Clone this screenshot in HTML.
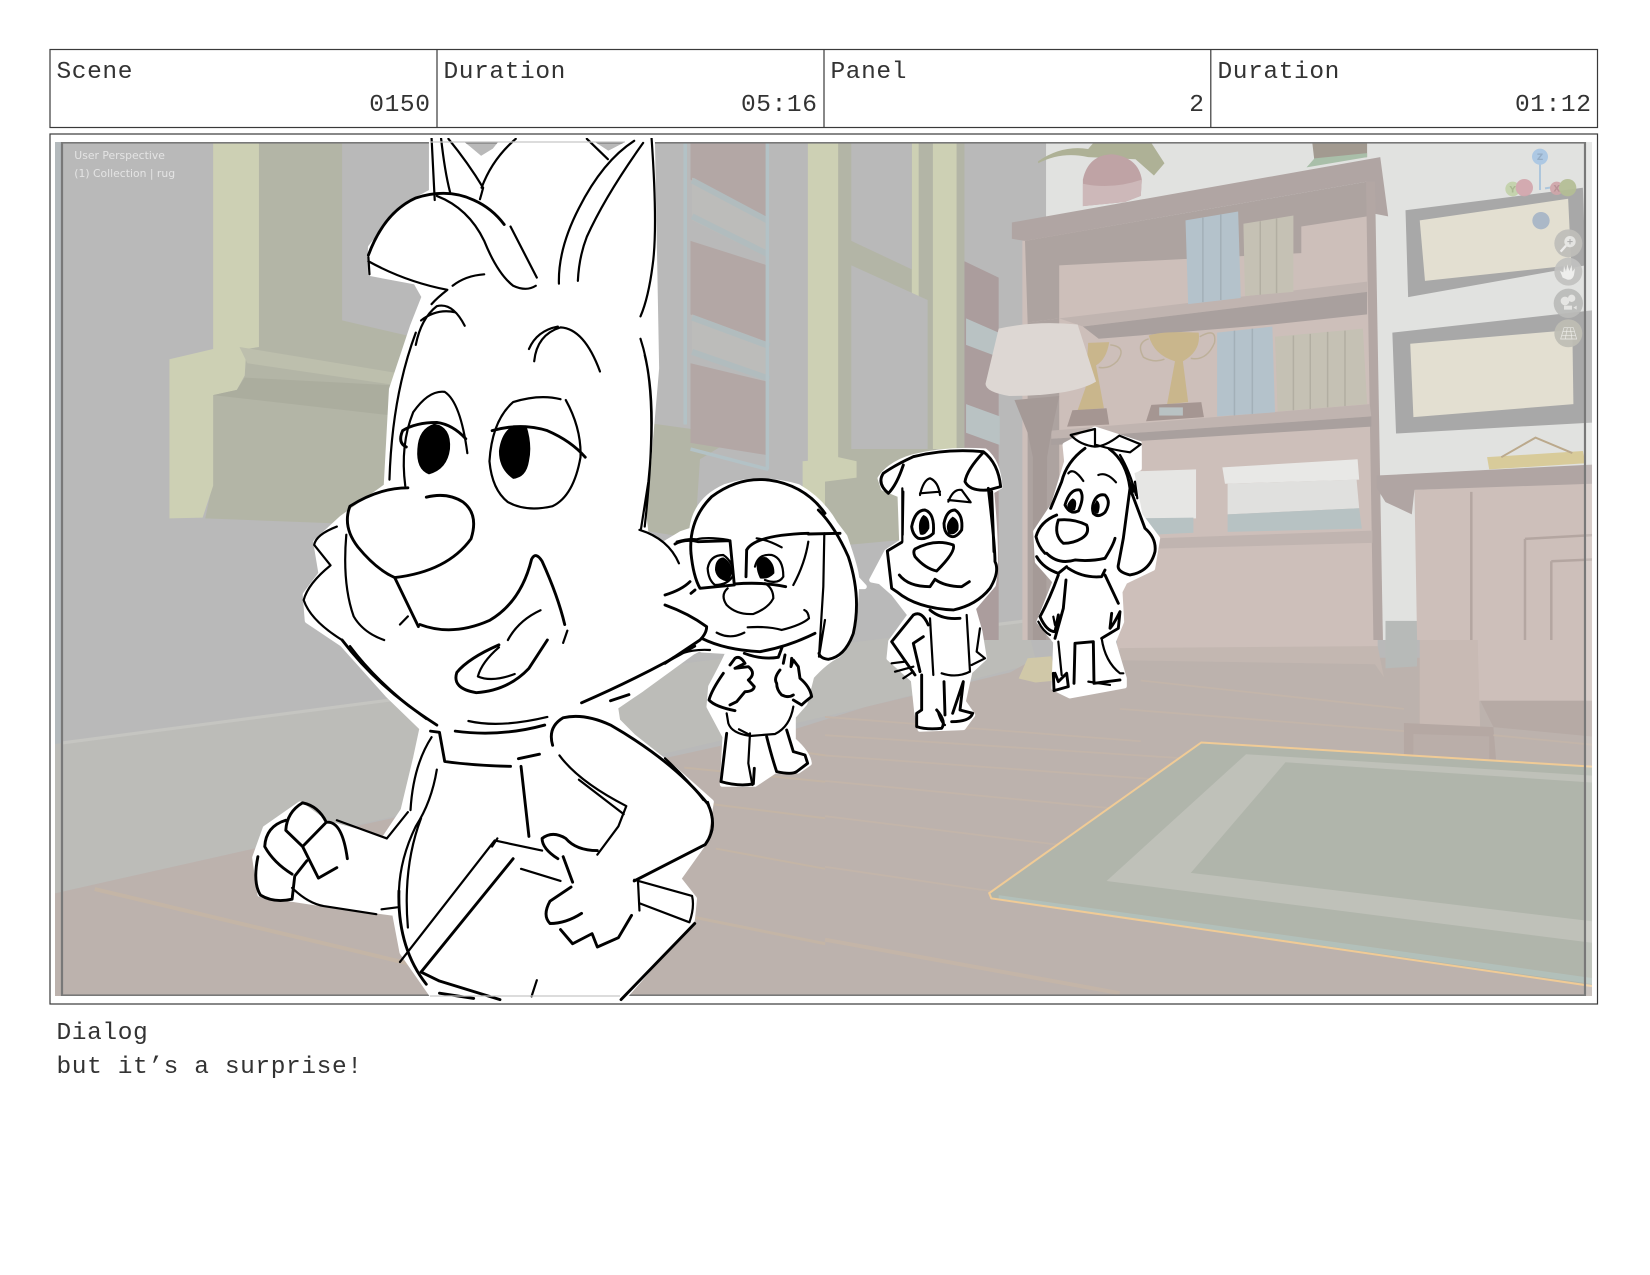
<!DOCTYPE html>
<html><head><meta charset="utf-8"><title>Storyboard panel</title>
<style>
html,body{margin:0;padding:0;background:#fff;width:1650px;height:1275px;overflow:hidden}
svg{display:block}
.t{font-family:"Liberation Mono",monospace;font-size:24.5px;letter-spacing:.6px;fill:#333}
.v{font-family:"DejaVu Sans",sans-serif;font-size:10.8px;fill:#e4e4e4}
.g{font-family:"DejaVu Sans",sans-serif;font-size:26px;font-weight:bold;text-anchor:middle}
.l path{fill:none;stroke:#000;stroke-width:2.2;vector-effect:non-scaling-stroke;stroke-linecap:round;stroke-linejoin:round}
.l path.b{stroke-width:2.9}
.l path.s{fill:#000;stroke:none}
.w path{fill:#fff;stroke:#fff;stroke-width:5;vector-effect:non-scaling-stroke;stroke-linejoin:round}
</style></head><body>
<svg width="1650" height="1275" viewBox="0 0 1650 1275" xmlns="http://www.w3.org/2000/svg">
<defs><clipPath id="sc"><rect x="55" y="142" width="1537" height="854"/></clipPath>
<clipPath id="ch"><rect x="55" y="138" width="1537" height="864"/></clipPath></defs>
<rect width="1650" height="1275" fill="#fff"/>

<!-- header table -->
<g fill="none" stroke="#3a3a3a" stroke-width="1.2">
<rect x="50" y="49.5" width="1547.5" height="78"/>
<path d="M437 49.5V127.5M824 49.5V127.5M1210.8 49.5V127.5"/>
<rect x="50" y="134" width="1547.5" height="870"/>
</g>
<text class="t" x="56.5" y="78">Scene</text><text class="t" x="430.5" y="111" text-anchor="end">0150</text>
<text class="t" x="443.5" y="78">Duration</text><text class="t" x="817.5" y="111" text-anchor="end">05:16</text>
<text class="t" x="830.5" y="78">Panel</text><text class="t" x="1204.5" y="111" text-anchor="end">2</text>
<text class="t" x="1217.5" y="78">Duration</text><text class="t" x="1591.5" y="111" text-anchor="end">01:12</text>
<text class="t" x="56.5" y="1039">Dialog</text>
<text class="t" x="56.5" y="1073">but it’s a surprise!</text>

<!-- scene -->
<g clip-path="url(#sc)">
<rect x="55" y="142" width="1537" height="854" fill="#b9b9b9"/>
<rect x="55" y="142" width="7" height="854" fill="#b4babd"/>
<!-- floor + baseboard (main coords) -->
<g transform="scale(1.0523)">
<polygon fill="#bcbcb8" points="52,707 380,664 975,590 985,630 822,672 252,804 52,849"/>
<polygon fill="#bcb2ad" points="52,849 252,804 752,694 822,672 960,639 985,625 1510,625 1510,950 52,950"/>
<path d="M59,706 L380,664 M935,595 L975,590" stroke="#c5c5c1" stroke-width="3" fill="none"/>
</g>
<!-- left window (z1 coords) -->
<g transform="scale(.5263,.4082)">
<polygon fill="#b3b5a6" points="492,340 650,340 650,785 800,830 800,1290 390,1270 403,1190 403,968 450,955 465,920 468,855 492,850"/>
<polygon fill="#cdd0b4" points="405,340 492,340 492,850 468,855 465,920 450,955 405,968 405,1190 385,1268 322,1270 322,880 405,855"/>
<polygon fill="#bdbfad" points="455,850 760,915 760,945 470,890"/>
<polygon fill="#abad9e" points="405,968 450,955 465,925 760,945 760,1020"/>
<polygon fill="#b3b5a6" points="1225,1035 1365,1060 1368,1095 1330,1125 1320,1320 1225,1300"/>
<polygon fill="#b3a7a5" points="1312,340 1458,340 1458,540 1312,440"/>
<polygon fill="#b3a7a5" points="1312,590 1458,650 1458,850 1312,770"/>
<polygon fill="#b3a7a5" points="1312,890 1458,935 1458,1115 1312,1085"/>
<polygon fill="#bcbcba" points="1315,435 1458,535 1458,630 1315,540"/>
<polygon fill="#bcbcba" points="1315,770 1462,840 1462,935 1315,870"/>
<path d="M1315,442 L1458,540M1315,530 L1458,622M1315,778 L1462,848M1315,862 L1462,928" stroke="#b1bcbe" stroke-width="6" fill="none" vector-effect="non-scaling-stroke"/>
<path d="M1302,340V1040M1458,340V1150M1312,1100 L1460,1150" stroke="#b3c2c6" stroke-width="3.5" fill="none" vector-effect="non-scaling-stroke"/>
<polygon fill="#cdd0b4" points="1525,1130 1568,1125 1568,1320 1525,1320"/>
<polygon fill="#cdd0b4" points="1535,340 1568,340 1568,1130 1535,1130"/>
</g>
<!-- right window + bookshelf (z2 coords) -->
<g transform="translate(825,0) scale(.5263,.4082)">
<polygon fill="#e1e2e0" points="420,340 1470,340 1470,1568 420,1568"/>
<polygon fill="#b7bab8" points="1065,1521 1130,1521 1130,1568 1065,1568"/>
<polygon fill="#b3b5a6" points="0,340 265,340 265,1130 170,1320 0,1340"/>
<polygon fill="#cdd0b4" points="0,340 25,340 25,1120 60,1130 60,1170 0,1180"/>
<polygon fill="#cdd0b4" points="165,340 178,340 178,1000 165,1000"/>
<polygon fill="#cdd0b4" points="205,340 250,340 250,1100 205,1100"/>
<polygon fill="#b9b9b9" points="50,340 165,340 165,660 50,590"/>
<polygon fill="#b9b9b9" points="50,650 195,735 195,1100 50,1100"/>
<!-- brick panels behind -->
<polygon fill="#ab9d9d" points="265,640 330,680 330,1568 265,1568"/>
<polygon fill="#b9c2c3" points="268,780 330,815 330,875 268,845"/>
<polygon fill="#b9c2c3" points="268,990 332,1020 332,1090 268,1060"/>
<!-- shelf -->
<polygon fill="#cdbfba" points="375,590 1040,445 1060,1568 375,1568"/>
<polygon fill="#ada3a0" points="380,590 1030,445 1030,530 905,555 905,620 445,650 445,780 385,790"/>
<polygon fill="#ada3a0" points="385,790 445,780 445,1568 385,1568"/>
<polygon fill="#c0b4b0" points="445,780 1030,690 1030,715 490,800"/>
<polygon fill="#a9a09e" points="490,800 1030,715 1030,770 850,795 520,830"/>
<polygon fill="#b0a5a3" points="355,545 1055,385 1070,530 1030,520 1030,445 380,590 355,585"/>
<polygon fill="#b3a7a4" points="1028,445 1045,445 1060,1568 1042,1568"/>
<polygon fill="#c0b4b0" points="430,1055 1035,990 1038,1020 430,1075"/>
<polygon fill="#a9a09e" points="430,1075 1038,1020 1038,1045 600,1080 430,1090"/>
<polygon fill="#c0b4b0" points="600,1320 1040,1300 1040,1330 600,1345"/>
<!-- books -->
<polygon fill="#b4c2cb" points="685,540 785,518 790,730 690,745"/>
<path d="M718,533V740M752,525V735" stroke="#a3b0b8" stroke-width="1.5" fill="none" vector-effect="non-scaling-stroke"/>
<polygon fill="#c5c1b4" points="795,548 890,528 890,715 798,725"/>
<path d="M827,542V722M858,535V718" stroke="#b2aea2" stroke-width="1.5" fill="none" vector-effect="non-scaling-stroke"/>
<polygon fill="#b4c2cb" points="745,815 850,800 855,1010 745,1020"/>
<path d="M778,810V1018M812,805V1014" stroke="#a3b0b8" stroke-width="1.5" fill="none" vector-effect="non-scaling-stroke"/>
<polygon fill="#c5c1b4" points="855,825 1022,805 1030,990 860,1008"/>
<path d="M890,822V1005M922,818V1002M955,813V998M988,810V995" stroke="#b2aea2" stroke-width="1.5" fill="none" vector-effect="non-scaling-stroke"/>
<!-- trophies -->
<path d="M615,822 Q640,810 710,815 Q715,860 680,885 L690,985 L650,990 L665,885 Q625,870 615,822Z" fill="#c9b68c"/>
<path d="M615,830 Q590,840 605,875 Q625,890 645,880M712,825 Q745,800 740,840 Q725,885 695,878" stroke="#bdb09a" stroke-width="1.5" fill="none" vector-effect="non-scaling-stroke"/>
<polygon fill="#a59692" points="620,992 715,985 720,1022 610,1032"/>
<rect x="635" y="998" width="45" height="20" fill="#b9c2c3"/>
<path d="M500,840 L540,838 Q535,880 515,895 L530,1000 L480,1005 L495,950Z" fill="#c9b68c"/>
<path d="M542,845 Q575,850 555,885 Q540,905 520,900" stroke="#bdb09a" stroke-width="1.5" fill="none" vector-effect="non-scaling-stroke"/>
<polygon fill="#a59692" points="470,1005 535,1000 540,1040 460,1045"/>
<!-- lamp -->
<polygon fill="#a59a97" points="360,980 445,970 430,1060 422,1120 420,1568 395,1568 395,1120 385,1060"/>
<path d="M330,805 Q400,785 480,795 L515,935 Q470,970 350,970 Q305,960 305,940Z" fill="#ddd7d3"/>
<!-- pots -->
<path d="M405,395 Q450,355 500,365 L510,350 L620,350 L645,400 L625,430 L590,390 L500,385 Q450,370 405,400Z" fill="#aeb196"/>
<path d="M490,440 Q500,380 545,378 Q595,385 602,440 L600,480 L570,495 L490,505Z" fill="#bfa3a5"/>
<path d="M490,450 Q545,465 602,440 L600,480 L570,495 L490,505Z" fill="#cdb8b9"/>
<polygon fill="#a29a90" points="925,340 1030,340 1030,385 930,395"/>
<polygon fill="#a9bfa9" points="915,410 930,388 1030,375 1030,385"/>
<!-- picture frames -->
<polygon fill="#a8a8a8" points="1103,515 1440,460 1445,650 1108,728"/>
<polygon fill="#e3dfd1" points="1130,540 1412,487 1418,650 1140,688"/>
<polygon fill="#a8a8a8" points="1078,815 1460,760 1460,1035 1085,1062"/>
<polygon fill="#e3dfd1" points="1112,842 1420,808 1422,990 1118,1022"/>
<!-- desk -->
<polygon fill="#cdbfba" points="1120,1200 1470,1180 1470,1568 1125,1568"/>
<polygon fill="#b0a5a3" points="1048,1165 1460,1138 1460,1185 1120,1200 1115,1260 1065,1230 1048,1195"/>
<path d="M1228,1205V1568M1330,1320 L1470,1310 M1330,1320V1568M1380,1375 L1470,1370 M1380,1375V1568" stroke="#b4a6a1" stroke-width="2.5" fill="none" vector-effect="non-scaling-stroke"/>
<polygon fill="#d8cb9a" points="1258,1120 1440,1105 1445,1135 1262,1150"/>
<path d="M1285,1120 L1350,1072 L1420,1110" stroke="#bba98c" stroke-width="2" fill="none" vector-effect="non-scaling-stroke"/>
<!-- boxes -->
<polygon fill="#e8e8e6" points="755,1145 1012,1125 1015,1175 760,1185"/>
<polygon fill="#e0e0de" points="765,1185 1010,1175 1015,1245 765,1260"/>
<polygon fill="#b7c2c3" points="765,1260 1015,1245 1020,1295 765,1303"/>
<polygon fill="#e6e6e4" points="580,1155 705,1150 705,1270 580,1270"/>
<polygon fill="#b7c2c3" points="590,1270 700,1268 700,1305 620,1310"/>
</g>
<!-- lower right (z4 coords) -->
<g transform="translate(825,640) scale(.5263,.405)">
<polygon fill="#bcb2ad" points="380,70 1470,55 1470,900 380,900"/>
<polygon fill="#cdbfba" points="555,0 1050,0 1050,25 555,25"/>
<polygon fill="#c3b7b1" points="560,20 1050,15 1062,92 1045,60 560,50"/>
<polygon fill="#b7bab8" points="1065,0 1125,0 1125,65 1065,70"/>
<polygon fill="#cdbfba" points="1240,0 1470,0 1470,150 1240,150"/>
<polygon fill="#b6aaa5" points="1245,150 1470,150 1470,240 1270,215"/>
<polygon fill="#c8bab4" points="1130,0 1240,0 1245,225 1130,225"/>
<polygon fill="#b5a8a3" points="1100,205 1270,215 1275,295 1100,285"/>
<polygon fill="#baaea9" points="1118,232 1262,238 1262,295 1118,285"/>
<polygon fill="#d0c8a8" points="368,95 385,45 430,40 440,100 400,105"/>
<path d="M0,190 L600,250M0,235 L680,292M0,285 L640,345M0,348 L540,415M0,435 L440,505M0,560 L315,620M600,100 L1100,170M560,170 L1100,225M1270,235 L1470,260" stroke="#c3b5aa" stroke-width="1.8" fill="none" vector-effect="non-scaling-stroke"/>
<path d="M0,740 L560,872" stroke="#c4b5a8" stroke-width="4" fill="none" vector-effect="non-scaling-stroke"/>
<polygon fill="#b0b5ab" points="715,253 1460,313 1460,855 315,638 312,625"/>
<polygon fill="#bfc1b9" points="800,282 1460,335 1460,748 535,595"/>
<polygon fill="#b0b5ab" points="875,302 1460,352 1460,695 695,575"/>
<polygon fill="#b2c0ba" points="330,630 1460,835 1460,850 330,640"/>
<path d="M1460,313 L715,253 L312,625 L316,638 L1460,855" stroke="#f0cb96" stroke-width="2" fill="none" vector-effect="non-scaling-stroke"/>
</g>
<!-- lower left floor stripes (z3) -->
<g transform="translate(0,640) scale(.5263,.405)" fill="none" stroke="#c4b5a6">
<path d="M180,615 L780,800" stroke-width="4" vector-effect="non-scaling-stroke"/>
<path d="M1320,685 L1568,750" stroke-width="3" vector-effect="non-scaling-stroke"/>
<path d="M1350,405 L1568,440M1360,515 L1568,565M1400,255 L1568,285M1300,315 L1568,350" stroke-width="2" vector-effect="non-scaling-stroke"/>
</g>
<!-- frame -->
<rect x="62" y="142.5" width="1523" height="853" fill="none" stroke="#787878" stroke-width="2.2"/>
<rect x="1586" y="142" width="6" height="854" fill="#fff" opacity=".22"/>
<text class="v" x="74.3" y="159">User Perspective</text>
<text class="v" x="74.3" y="177">(1) Collection | rug</text>
<!-- gizmo + icons -->
<g transform="translate(1490,135) scale(.3333)" opacity=".92">
<path d="M150,85V165M165,160L200,155" stroke="#a9c4dc" stroke-width="6" fill="none"/>
<circle cx="150" cy="65" r="24" fill="#a9c6e4"/>
<circle cx="68" cy="162" r="22" fill="#c3d2aa"/>
<circle cx="103" cy="158" r="26" fill="#d2a6ad"/>
<circle cx="200" cy="160" r="20" fill="#d0a6aa"/>
<circle cx="233" cy="158" r="26" fill="#b4be95"/>
<circle cx="153" cy="257" r="26" fill="#a7b5c7"/>
<text class="g" x="150" y="75" fill="#8fa9c4">Z</text>
<text class="g" x="68" y="172" fill="#a6b68c">Y</text>
<text class="g" x="200" y="170" fill="#b58c90">X</text>
<circle cx="235" cy="325" r="42" fill="#bfbeba"/>
<circle cx="235" cy="410" r="42" fill="#c2c2c0"/>
<circle cx="235" cy="505" r="44" fill="#bbbbb9"/>
<circle cx="235" cy="595" r="42" fill="#bfbeb5"/>
<path d="M228,332L212,350" stroke="#eee" stroke-width="7" fill="none"/>
<circle cx="240" cy="320" r="17" fill="#e8e8e6"/>
<path d="M232,320H248M240,312V328" stroke="#aaa" stroke-width="3" fill="none"/>
<path d="M218,428 L210,408 L220,412 L222,392 L228,410 L232,388 L238,408 L245,390 L247,410 L255,400 L252,420 Q248,436 232,434Z" fill="#f0f0ee"/>
<circle cx="225" cy="498" r="13" fill="#e6e6e4"/><circle cx="245" cy="490" r="11" fill="#e6e6e4"/>
<rect x="222" y="512" width="24" height="12" fill="#e6e6e4"/><path d="M250,518L260,512V524Z" fill="#e6e6e4"/>
<path d="M222,578H250L260,612H212ZM232,578L226,612M241,578L246,612M218,590H254M215,601H258" stroke="#efefec" stroke-width="2" fill="none"/>
</g>
</g>

<!-- characters -->
<g clip-path="url(#ch)">
<g class="w">
<g transform="scale(1.0523)">
<path d="M410,133 L435,133 L445,141 L457,151 L470,143 L478,133 L558,133 L578,146 L603,133 L620,133 L624,350 L612,490 L614,508 L638,522 L653,540 L648,570 L678,610 L658,620 L610,655 L585,672 L587,685 L602,700 L640,730 L676,762 L670,800 L645,835 L660,854 L658,874 L593,948 L412,948 L382,905 L375,868 L300,858 L247,850 L242,815 L252,787 L285,764 L310,782 L365,797 L383,770 L395,720 L401,692 L368,660 L325,612 L292,590 L290,565 L305,545 L300,515 L325,492 L367,462 L372,370 L392,310 L403,282 L395,268 L352,260 L352,235 L382,197 L410,182Z"/>
</g>
<g transform="translate(665,470) scale(.3333)">
<path d="M80,180 Q90,90 180,50 Q280,15 400,50 Q470,90 510,160 L540,200 Q575,300 575,325 L598,350 L575,350 Q570,500 520,555 Q480,575 440,620 L420,700 L385,740 L385,810 Q430,850 433,880 L400,903 L330,903 L270,943 L172,943 L180,800 L132,710 L137,650 Q180,570 190,545 L110,540 L60,520 L0,570 L0,220 L50,190Z"/>
</g>
<g transform="translate(870,445) scale(.3333)">
<path d="M30,100 Q60,55 130,35 Q230,10 345,18 Q385,50 390,125 L365,140 Q385,350 370,420 L310,490 L330,560 L343,640 L300,680 L280,770 L308,810 L280,848 L150,853 L140,800 L130,705 L57,640 L62,590 L120,510 L70,445 L30,410 L5,405 L50,320 L95,290 L90,150 L40,130Z"/>
</g>
<g transform="translate(1030,425) scale(.3333)">
<path d="M105,60 L195,12 L328,55 L328,130 L305,140 L330,270 L383,340 L368,430 L285,470 L270,500 L275,590 L250,650 L283,760 L283,783 L120,813 L72,790 L77,650 L27,590 L75,470 L22,410 L17,320 L70,240 L110,110Z"/>
</g>
</g>

<!-- big dog top -->
<g class="l" transform="scale(.5263,.4082)">
<path d="M820,338 Q823,420 826,490M838,338 Q845,420 855,470M852,340 Q890,400 918,460 Q915,475 912,488M980,340 Q935,390 915,460"/>
<path d="M1115,340 Q1135,365 1155,390M1205,345 Q1145,395 1100,510 Q1060,610 1062,695M1222,350 Q1150,480 1115,580 Q1100,630 1098,688M1238,338 Q1250,560 1240,650 Q1232,730 1217,775"/>
<path class="b" d="M700,625 Q730,520 790,485 Q850,460 900,490 Q935,510 958,550"/>
<path d="M700,630 L702,672M700,640 Q770,690 850,710 Q830,730 820,745M860,700 Q885,675 920,672M830,480 Q890,510 920,590 Q945,670 975,700 Q1000,715 1018,700M970,555 L1020,680"/>
<path d="M790,845 Q800,780 830,750 Q860,740 883,798M800,785 Q830,755 865,765"/>
<path d="M1015,885 Q1020,820 1065,802 Q1110,805 1140,910M1005,855 Q1020,810 1060,800"/>
<path d="M790,815 Q745,970 740,1175"/>
<path d="M1217,830 Q1250,960 1232,1180 L1218,1295M1225,870 Q1250,1000 1225,1290"/>
<path d="M770,1190 Q760,1090 785,1010 Q815,955 845,960 Q875,985 888,1110"/>
<path class="b" d="M885,1075 Q860,1040 830,1035 Q790,1035 765,1055 Q755,1085 772,1095"/>
<path class="s" d="M825,1038 Q858,1045 855,1100 Q850,1150 815,1162 Q790,1150 793,1100 Q795,1050 825,1038Z"/>
<path d="M1065,978 Q1025,965 975,985 Q935,1030 930,1130 Q935,1200 965,1230 Q1000,1255 1050,1240 Q1090,1215 1103,1120 Q1105,1050 1075,980"/>
<path class="b" d="M935,1055 Q990,1035 1040,1055 Q1085,1080 1112,1120"/>
<path class="s" d="M975,1042 L1000,1042 Q1012,1090 1005,1130 Q1000,1170 975,1173 Q948,1150 948,1105 Q952,1060 975,1042Z"/>
<path class="b" d="M775,1195 Q720,1195 665,1240 Q650,1290 680,1340 Q715,1395 750,1415 Q850,1400 895,1320 Q910,1260 880,1230 Q850,1205 810,1218"/>
<path d="M640,1290 Q600,1310 597,1335 L628,1385 Q585,1430 577,1470 Q590,1520 650,1568M658,1310 Q650,1430 672,1510 Q690,1550 730,1568"/>
<path class="b" d="M750,1415 L795,1535M798,1530 Q860,1560 930,1520 Q990,1475 1010,1370 Q1018,1350 1030,1375 Q1060,1460 1073,1530"/>
<path d="M760,1530 L775,1510M1027,1495 Q985,1520 965,1568M1078,1545 L1070,1575M1215,1298 Q1270,1320 1290,1380"/>
</g>
<!-- big dog bottom -->
<g class="l" transform="translate(0,640) scale(.5263,.405)">
<path class="b" d="M650,0 Q720,120 830,210"/>
<path d="M665,15 Q720,110 810,195"/>
<path class="b" d="M948,12 Q890,45 868,80 Q858,120 905,130 Q965,125 1005,70 L1040,0"/>
<path d="M948,18 Q915,55 908,90 Q935,105 978,84"/>
<path class="b" d="M1320,15 Q1220,90 1105,155M1195,135 L1160,150M865,225 Q950,240 1035,210"/>
<path d="M890,200 Q950,218 1040,190"/>
<path class="b" d="M818,225 L835,228 L845,300 Q900,310 970,312M985,293 L1025,282"/>
<path d="M820,240 Q785,310 780,420M830,320 Q820,400 790,460 Q760,540 758,620M800,440 Q765,560 775,710"/>
<path class="b" d="M758,620 Q755,760 810,850M990,312 L1005,485"/>
<path class="b" d="M1050,260 Q1040,215 1070,192 Q1110,180 1160,210 Q1280,300 1345,405 Q1365,460 1340,505 L1205,595"/>
<path d="M1345,400 Q1360,460 1350,480M1063,285 Q1100,350 1190,410 L1175,460 L1135,530M1100,345 L1185,430"/>
<path class="b" d="M575,402 Q545,425 543,470 L575,510 L620,450 Q605,410 575,402ZM620,450 Q650,445 660,540M575,510 L605,588 L640,562M543,445 Q505,460 503,510 Q520,550 555,578M583,545 L560,583 L555,640 Q520,650 495,630 Q480,600 490,535"/>
<path d="M640,445 L735,490 L775,425M555,612 Q585,650 615,657 L715,677M725,665 L755,660"/>
<path d="M760,795 L940,495 L1030,520M945,490 L935,510M990,565 L1065,595M1020,840 L1010,880"/>
<path class="b" d="M975,540 L800,820 L835,842 L950,888M835,872 L900,885M1180,888 L1320,700"/>
<path d="M1205,592 L1315,632 Q1320,660 1310,697 L1215,650M1212,590 L1215,668"/>
<path class="b" d="M1060,540 Q1030,515 1030,490 Q1050,470 1075,490 Q1095,520 1135,520M1070,535 L1088,598M1085,610 L1045,645 Q1030,680 1045,700 Q1075,700 1105,675M1065,715 L1088,750 L1125,725 L1135,758 L1175,735 L1200,680"/>
</g>
<!-- dog 2 -->
<g class="l" transform="translate(665,470) scale(.3333)">
<path class="b" d="M78,250 Q70,150 140,80 Q220,20 310,30 Q420,45 480,130M460,120 Q510,170 550,260 Q590,380 565,490 Q540,560 490,568 Q465,565 462,550"/>
<path d="M478,190 L475,350 L462,560 L480,450"/>
<path class="b" d="M30,222 Q60,205 100,215 L195,212 L208,345 L105,355 Q85,320 78,250M430,192 L525,190M245,240 Q270,195 430,190M245,240 L243,320M210,342 Q290,335 362,350"/>
<path d="M35,215 Q70,205 95,208 Q130,200 190,210M430,215 Q420,280 385,345M275,205 Q310,210 350,232M270,290 Q280,250 320,255 Q355,265 355,320 Q340,345 300,330"/>
<path d="M128,295 Q135,255 175,255 Q205,275 205,315 Q190,345 150,345 Q130,330 128,295Z"/>
<path class="s" d="M175,262 Q200,275 202,310 L190,335 Q155,330 150,300 Q150,265 175,262ZM305,262 Q330,280 328,310 Q310,330 285,325 Q268,290 280,270Q290,258 305,262Z"/>
<path d="M188,355 Q165,375 185,405 Q215,435 265,432 Q310,415 325,385 Q325,355 300,340"/>
<path d="M155,488 Q195,510 238,488M248,472 Q310,468 350,480 Q410,465 432,445 Q430,425 418,420"/>
<path class="b" d="M110,505 Q180,540 285,545 Q370,530 450,490M238,550 Q290,570 340,562 L352,530"/>
<path class="b" d="M0,405 Q70,430 125,470 Q125,490 105,510 L0,580M75,335 Q50,360 0,375M78,370 L90,360"/>
<path d="M0,580 Q50,535 135,540M0,865 Q70,930 115,990"/>
<path class="b" d="M195,585 L210,565 Q225,555 240,580 L210,595 L250,590 Q275,610 250,630 L268,650 Q265,665 240,665 L215,695 L195,705M175,610 Q140,660 132,690 Q150,710 210,722"/>
<path class="b" d="M360,555 L355,580M380,565 L378,590 L385,570 L400,590 L405,625 Q435,650 440,680 Q420,695 410,705L385,690M345,600 Q325,625 335,640 Q335,660 350,675 Q370,685 385,675"/>
<path d="M185,730 L190,760 Q200,790 255,798 L330,792 Q375,770 385,710M255,790 L250,880 L262,945M222,778 L255,795"/>
<path class="b" d="M185,790 L168,935 Q220,950 265,942 L268,895M305,800 Q320,860 335,905 Q380,915 395,905 L428,880 L420,855 L385,845 L365,780"/>
</g>
<!-- dog 3 -->
<g class="l" transform="translate(870,445) scale(.3333)">
<path class="b" d="M130,35 Q75,60 40,85 Q20,115 55,145 Q80,120 100,60M130,35 Q230,10 340,20 Q385,55 392,125L355,135 Q300,140 285,110 Q290,75 340,22"/>
<path d="M97,130 L97,290M100,140 L98,270"/>
<path class="b" d="M355,130 Q375,300 375,350 Q390,380 360,430 Q320,480 250,495 Q140,490 80,440 L65,430 L52,318 L95,292M365,140 L372,320"/>
<path d="M150,150 Q160,105 180,100 Q205,110 210,150M150,145 L210,140M235,170 Q250,130 275,135 L302,172 L235,165"/>
<path class="b" d="M125,245 Q135,195 165,195 Q195,205 190,265 Q170,285 145,280 Q128,270 125,245ZM222,235 Q230,195 255,195 Q280,210 275,255 Q255,285 235,270 Q222,260 222,235Z"/>
<path class="s" d="M160,210 Q180,215 178,250 Q165,275 150,268 Q140,230 160,210ZM248,215 Q270,225 265,255 Q250,275 235,265 Q222,235 248,215Z"/>
<path class="b" d="M135,312 Q195,280 250,300 Q258,320 200,378 Q165,370 135,335 Q128,320 135,312ZM88,390 Q115,425 180,425 L195,403 Q225,425 275,425 L298,410"/>
<path class="b" d="M180,495 Q215,525 270,520M130,510 Q155,495 175,540 M130,510 L65,590 L135,690 M160,575 L130,595 L150,680"/>
<path d="M65,655 L105,650M75,680 L130,665M100,700 L130,680M215,685 Q260,700 300,680 L290,510M180,520 L190,690 M330,550 L320,620 L345,640 L305,660"/>
<path class="b" d="M155,690 L155,795 L140,805 L140,845 Q170,855 215,850 Q230,830 200,795M222,710 L225,810M248,805 L280,710L270,795 L308,805 Q300,830 245,830"/>
<path d="M205,805 Q215,835 225,840"/>
</g>
<!-- dog 4 -->
<g class="l" transform="translate(1030,425) scale(.3333)">
<path d="M122,30 L195,12 L195,65 Q150,60 122,30ZM195,65 Q225,65 268,32 L332,58 L300,82 Q250,75 200,60"/>
<path class="b" d="M165,70 Q110,110 95,170 L62,250M238,72 Q290,110 300,190 L345,310 Q380,340 375,380 Q360,440 300,450 Q260,440 265,420 L280,340 L300,190"/>
<path d="M315,170 L322,220M270,90 Q300,140 318,210M280,120 L310,200"/>
<path d="M115,145 Q130,125 160,168M205,150 Q230,140 258,172"/>
<path class="b" d="M105,240 Q120,190 150,195 Q165,215 145,258 Q120,270 105,240ZM190,235 Q200,205 225,210 Q245,230 225,262 Q205,280 190,265 Q185,250 190,235Z"/>
<path class="s" d="M128,220 Q145,225 135,255 Q115,262 112,240 Q118,225 128,220ZM200,225 Q215,235 205,265 Q190,270 190,245Z"/>
<path class="b" d="M85,285 Q130,280 170,300 Q180,325 155,340 Q130,355 100,355 Q70,330 85,285ZM80,270 Q30,290 18,335 Q25,365 45,385 M20,395 Q40,430 85,445 L110,425M50,385 Q85,420 135,405 Q180,410 225,400 Q250,360 255,340M115,430 Q160,460 215,455 L225,435"/>
<path class="b" d="M85,450 Q60,520 30,575 Q50,620 75,620 L85,570M108,465 L100,550 L75,640M225,450 L265,535M245,565 L240,610 Q250,600 270,560 L265,610 L215,640"/>
<path d="M25,590 Q40,620 60,630M70,575 L75,600M215,640 Q225,710 270,745 L280,745"/>
<path class="b" d="M135,655 L190,650M135,655 L132,775M190,650 L192,775 L270,765M75,745 L85,770 L110,745 L115,785 L72,797 L70,745"/>
<path d="M85,650 L95,750M240,780 L175,770"/>
</g>
<path d="M430,142H625M430,996H620" stroke="#c8c8c8" stroke-width="1.2" fill="none"/>
</g>
</svg>
</body></html>
